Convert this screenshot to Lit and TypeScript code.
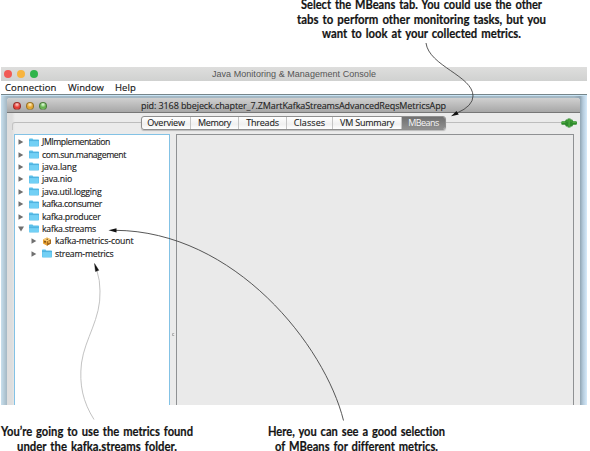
import { LitElement, html, css } from "lit";
import { customElement, property } from "lit/decorators.js";

/** A single line of text tracked, or condensed, to occupy a given width. */
@customElement("fit-label")
class FitLabel extends LitElement {
  @property() text = "";
  @property({ type: Number }) width = 0;
  @property({ type: Boolean }) condense = false;
  static styles = css`
    :host { display: block; white-space: pre; font-variant-ligatures: none; }
    .line { display: inline-block; transform-origin: 0 50%; }
  `;
  updated() {
    const line = this.renderRoot.querySelector<HTMLElement>(".line")!;
    line.style.letterSpacing = "0px";
    line.style.transform = "none";
    const natural = line.getBoundingClientRect().width;
    if (this.condense) {
      this.style.width = `${this.width}px`;
      line.style.transform = `scaleX(${this.width / natural})`;
    } else {
      line.style.letterSpacing = `${(this.width - natural) / this.text.length}px`;
    }
  }
  render() {
    return html`<span class="line">${this.text}</span>`;
  }
}

interface Node { name: string; w: number; kind?: "bean"; open?: boolean; child?: boolean; }

const NODES: Node[] = [
  { name: "JMImplementation", w: 68 },
  { name: "com.sun.management", w: 84 },
  { name: "java.lang", w: 34.5 },
  { name: "java.nio", w: 30 },
  { name: "java.util.logging", w: 59.5 },
  { name: "kafka.consumer", w: 60 },
  { name: "kafka.producer", w: 58.5 },
  { name: "kafka.streams", w: 54, open: true },
  { name: "kafka-metrics-count", w: 78.5, child: true, kind: "bean" },
  { name: "stream-metrics", w: 58.5, child: true },
];

const TABS = [
  { name: "Overview", w: 37.5, cls: "t1" },
  { name: "Memory", w: 33, cls: "t2" },
  { name: "Threads", w: 32.5, cls: "t3" },
  { name: "Classes", w: 31.5, cls: "t4" },
  { name: "VM Summary", w: 54, cls: "t5" },
  { name: "MBeans", w: 30.5, cls: "t6" },
];

@customElement("app-root")
class AppRoot extends LitElement {
  static styles = css`
    :host { display: block; position: relative; width: 590px; height: 451px; overflow: hidden; background: #fff; color: #1a1a1a; font-family: "Open Sans", "Noto Sans", sans-serif; }
    * { box-sizing: border-box; }
    .page { display: flex; flex-direction: column; height: 451px; }
    .note { font: 700 13.5px/14.6px Lato, "Open Sans", sans-serif; word-spacing: 1.5px; color: #141414; -webkit-text-stroke: .2px #141414; display: flex; flex-direction: column; align-items: center; }
    .top { flex: none; height: 67px; padding: 0 0 0 266px; width: 576px; margin-top: -3px; margin-bottom: 3px; }
    .app { flex: none; margin-left: 1px; width: 586px; height: 338px; display: flex; flex-direction: column; overflow: hidden; }
    .bar { height: 14px; flex: none; background: linear-gradient(#dededd, #d0d1d0); display: flex; align-items: center; }
    .lights { display: flex; gap: 5px; padding-left: 3px; width: 211px; }
    .dot { width: 8px; height: 8px; border-radius: 50%; }
    .red { background: #f15a55; } .amber { background: #f8b43f; } .green { background: #2fb44b; }
    .bartitle { font: 9px/14px "Liberation Sans", sans-serif; color: #555; }
    .menu { height: 14px; flex: none; display: flex; background: #fff; border-bottom: 1px solid #76858a; font-size: 9.5px; line-height: 14px; padding-left: 4px; color: #151515; -webkit-text-stroke: .15px #151515; }
    .m1 { width: 63px; } .m2 { width: 47px; }
    .desk { flex: 1; display: flex; padding: 2px 7px 0 6px; border-top: 1px solid #c8e4f5; background: linear-gradient(90deg, #c8dfed 0, #a4b8c4 6px, #a4b8c4 573px, #90a4b2 579px, #b5cbdc 582px, #d6eafa 586px); }
    .win { width: 573px; display: flex; flex-direction: column; background: #e9e9e9; border-radius: 3px 3px 0 0; overflow: hidden; }
    .wbar { height: 15px; flex: none; display: flex; align-items: center; background: linear-gradient(#d0d0d0, #a7a7a7); border-bottom: 1px solid #777; font-size: 9px; line-height: 14px; color: #222; padding-top: 1px; -webkit-text-stroke: .1px #222; }
    .wl { display: flex; gap: 5px; padding-left: 6px; width: 134px; }
    .gem { width: 8px; height: 8px; border-radius: 50%; border: 1px solid #0005; }
    .gr { background: radial-gradient(circle at 50% 25%, #ffd4cf, #e53a33 55%, #e84740); }
    .gy { background: radial-gradient(circle at 50% 25%, #fff0c5, #e3a32c 55%, #efbe4b); }
    .gg { background: radial-gradient(circle at 50% 25%, #e8ffe0, #62b24d 55%, #8bcc70); }
    .body { flex: 1; display: flex; flex-direction: column; padding: 2px 0 0 5px; background: linear-gradient(90deg, #dedede 5px, #ebebeb 8px); }
    .tabrow { height: 15px; display: flex; align-items: center; }
    .rule { height: 8px; align-self: flex-end; border-top: 1px solid #bdbdbd; flex: none; }
    .r1 { width: 129px; border-left: 1px solid #c4c4c4; border-radius: 3px 0 0; }
    .r2 { width: 115px; }
    .tabs { display: flex; flex: none; width: 305px; height: 14px; border: 1px solid #8e8e8e; border-radius: 3px; background: linear-gradient(#fff, #f0f0f0 60%, #fff); overflow: hidden; box-shadow: 0 1px 1px #bbb; }
    .tab { display: flex; justify-content: center; font-size: 9px; line-height: 12px; border-right: 1px solid #c4c4c4; color: #222; -webkit-text-stroke: .1px #222; }
    .t1 { width: 49px; } .t2 { width: 48px; } .t3 { width: 48px; } .t4 { width: 46px; } .t5 { width: 69px; }
    .t6 { flex: 1; border: 0; background: linear-gradient(#707070, #909090); color: #f6f6f6; -webkit-text-stroke: 0; }
    .plug { width: 16px; height: 12px; display: block; margin-top: 1px; flex: none; }
    .split { flex: 1; display: flex; padding: 4px 0 0 2px; }
    .tree { width: 156px; background: #fff; border: 1px solid #83c2e5; border-bottom: 0; padding-top: 1px; font-size: 8.7px; color: #1c1c1c; -webkit-text-stroke: .15px #1c1c1c; }
    .node { display: flex; align-items: center; height: 12.4px; line-height: 12px; padding-left: 3px; }
    .child { padding-left: 16px; }
    .tri { width: 6px; height: 6px; flex: none; margin-right: 5px; }
    .ico { width: 10px; height: 9px; flex: none; margin-right: 3px; }
    .grip { width: 6px; display: flex; align-items: center; justify-content: center; }
    .nub { width: 3px; height: 3px; border: 1px solid #aaa; border-right-color: #eee; border-radius: 50%; margin-top: 130px; }
    .pane { width: 398px; border: 1px solid #8f9193; border-bottom: 0; background: #eaeaea; }
    .edge { flex: 1; }
    .feet { display: flex; padding-top: 19px; }
    .f1 { width: 194px; } .f2 { width: 182px; margin-left: 71px; }
    .arrows { position: absolute; inset: 0; width: 590px; height: 451px; pointer-events: none; }
  `;

  icon(n: Node) {
    if (n.kind)
      return html`<svg class="ico" viewBox="0 0 10 9"><path d="M1 2.500 5 .5l4 2v4L5 8.700 1 6.500z" fill="#e8a234"/><path d="M5 .5l4 2-4 2-4-2z" fill="#f9ce79"/><path d="M5 4.500l4-2v4L5 8.700z" fill="#a5691f"/><circle cx="3" cy="4.800" r="1" fill="#7b4c13"/><circle cx="7" cy="5" r="1" fill="#f0b64e"/><circle cx="5.200" cy="2.200" r=".8" fill="#8c5a1c"/></svg>`;
    return html`<svg class="ico" viewBox="0 0 10 9"><path d="M0 1.200Q0 .5.7.5h2.800l.8 1h5q.7 0 .7.7v5.600q0 .7-.7.7H.7Q0 8.500 0 7.800z" fill="#5bbfe9"/><path d="${n.open ? "M0 4h10v4H0z" : "M.5 3h9v5h-9z"}" fill="#72d0f5"/><path d="${n.open ? "M0 3.700h10" : "M0 2.600h10"}" stroke="#46a9d7" stroke-width=".6"/></svg>`;
  }

  render() {
    const fit = (t: string, w: number) => html`<fit-label .text=${t} .width=${w}></fit-label>`;
    const note = (t: string, w: number) => html`<fit-label condense .text=${t} .width=${w}></fit-label>`;
    return html`
      <div class="page">
        <div class="note top">
          ${note("Select the MBeans tab. You could use the other", 241)}
          ${note("tabs to perform other monitoring tasks, but you", 249)}
          ${note("want to look at your collected metrics.", 199)}
        </div>
        <div class="app">
          <div class="bar">
            <div class="lights"><i class="dot red"></i><i class="dot amber"></i><i class="dot green"></i></div>
            <div class="bartitle">${fit("Java Monitoring & Management Console", 164)}</div>
          </div>
          <div class="menu">
            <div class="m1">${fit("Connection", 51.5)}</div>
            <div class="m2">${fit("Window", 36)}</div>
            ${fit("Help", 21)}
          </div>
          <div class="desk">
            <div class="win">
              <div class="wbar">
                <div class="wl"><i class="gem gr"></i><i class="gem gy"></i><i class="gem gg"></i></div>
                ${fit("pid: 3168 bbejeck.chapter_7.ZMartKafkaStreamsAdvancedReqsMetricsApp", 305)}
              </div>
              <div class="body">
                <div class="tabrow">
                  <div class="rule r1"></div>
                  <div class="tabs">${TABS.map((t) => html`<div class="tab ${t.cls}">${fit(t.name, t.w)}</div>`)}</div>
                  <div class="rule r2"></div>
                  <svg class="plug" viewBox="0 0 16 12"><path d="M1 4.300h3L5 2.600h1.700V1.400h2.800v1.200h1.700l1 1.700h3q.8 0 .8 1.700t-.8 1.700h-3l-1 1.700H9.500v1.200H6.700V9.400H5L4 7.700H1Q.2 7.700.2 6T1 4.300z" fill="#2f8b2c"/><path d="M1 5.300h3.500M11.500 5.300H15M5.500 4h1.200M9.500 4h1.300" stroke="#5ab548" stroke-width="1.100"/><path d="M8.100 2v8" stroke="#5ab548"/></svg>
                </div>
                <div class="split">
                  <div class="tree">
                    ${NODES.map((n) => html`<div class="node ${n.child ? "child" : ""}">
                      <svg class="tri" viewBox="0 0 6 6"><path d="${n.open ? "M0 .5h6L3 5.500z" : "M.5 .3v5.400L5.300 3z"}" fill="#707070"/></svg>
                      ${this.icon(n)}${fit(n.name, n.w)}
                    </div>`)}
                  </div>
                  <div class="grip"><i class="nub"></i></div>
                  <div class="pane"></div>
                  <div class="edge"></div>
                </div>
              </div>
            </div>
          </div>
        </div>
        <div class="feet">
          <div class="note f1">
            ${note("You’re going to use the metrics found", 192)}
            ${note("under the kafka.streams folder.", 160)}
          </div>
          <div class="note f2">
            ${note("Here, you can see a good selection", 177)}
            ${note("of MBeans for different metrics.", 163)}
          </div>
        </div>
      </div>
      <svg class="arrows" viewBox="0 0 590 451" fill="none" stroke-width=".9">
        <path d="M426 43C429 66 473 76 473 96Q473 106 457 113" stroke="#444"/>
        <path d="M451 116.300l5.500-5.300 2.300 3.600z" fill="#111"/>
        <path d="M343.500 420.500C325 346 235 231 115 230.300" stroke="#444"/>
        <path d="M108.500 230.300l8-2.100v4.200z" fill="#111"/>
        <path d="M94 419.500C83 402 79 385 81.500 363C85 338 101 319 100 291Q100 280 97 271" stroke="#bbb"/>
        <path d="M94.500 263.500l4.300 6.800-3.300 1.200z" fill="#111" stroke="#111" stroke-width=".4"/>
      </svg>
    `;
  }
}
